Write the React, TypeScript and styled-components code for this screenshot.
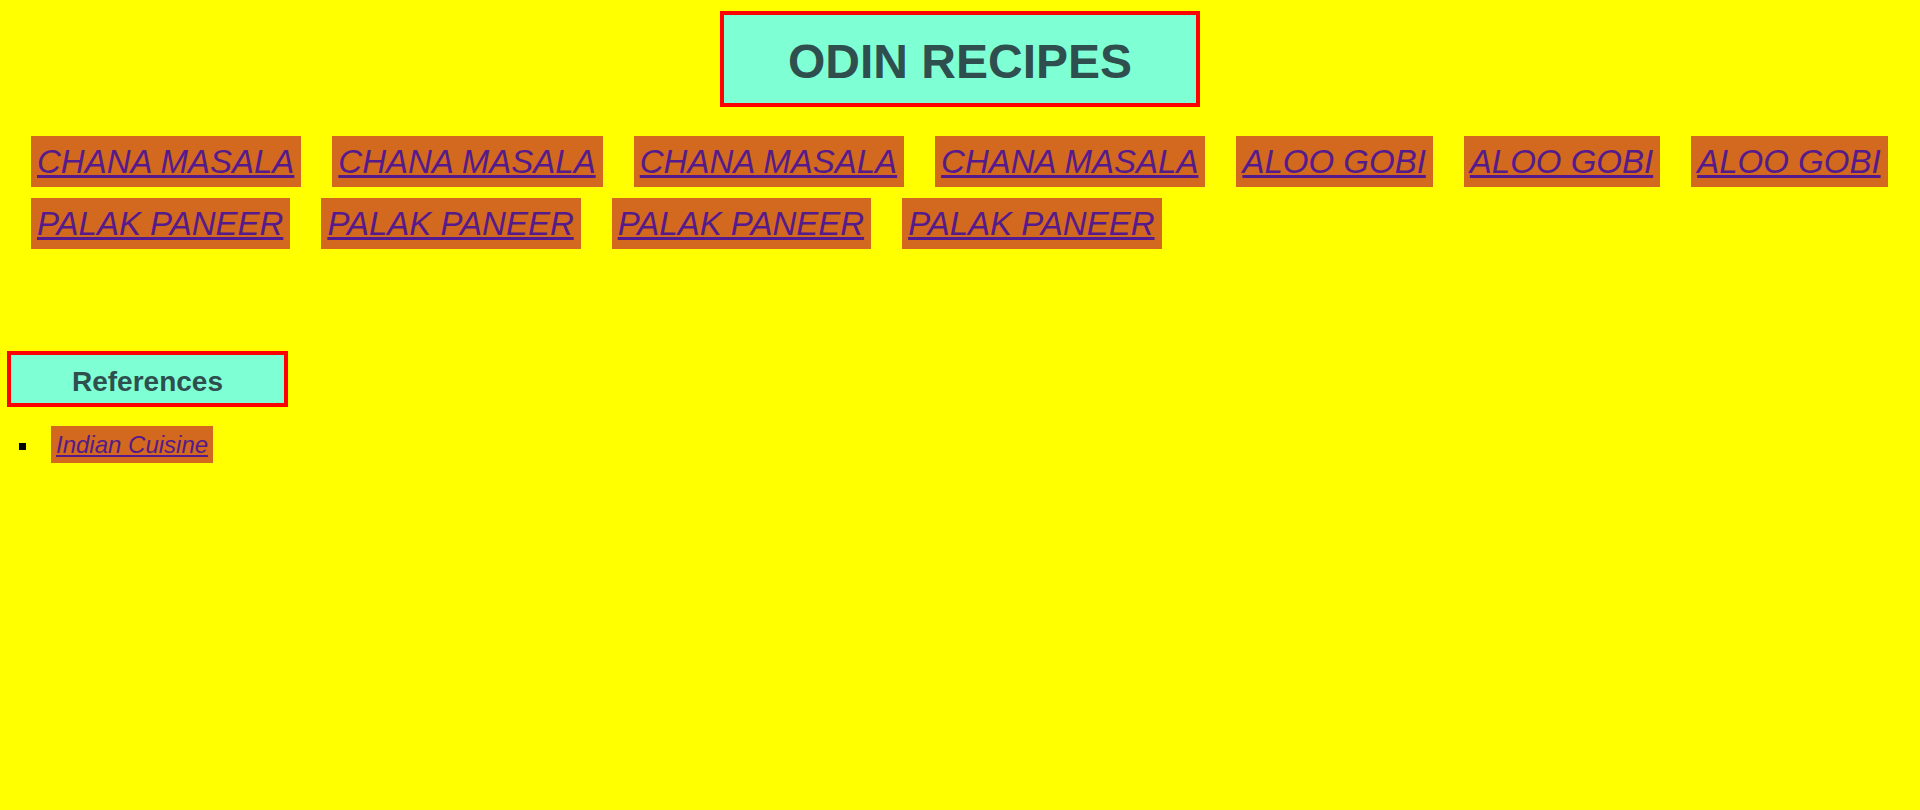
import React from "react";
import styled, { createGlobalStyle } from "styled-components";

const GlobalStyle = createGlobalStyle`
  body {
    margin: 0;
    background: #ffff00;
    font-family: "Liberation Sans", Arial, sans-serif;
  }
`;

const Page = styled.div`
  display: flex;
  flex-direction: column;
  padding: 11px 7px;
`;

const Title = styled.h1`
  box-sizing: border-box;
  align-self: center;
  min-width: 25vw;
  margin: 0;
  padding: 19px 16px 14px;
  border: 4px solid #ff0000;
  background: #7fffd4;
  color: #2f4f4f;
  font-size: 48px;
  line-height: 55px;
  text-align: center;
`;

const RecipeList = styled.ul`
  display: flex;
  flex-wrap: wrap;
  gap: 11px 31px;
  margin: 29px 24px 0;
  padding: 0;
  list-style: none;
`;

const RecipeItem = styled.li`
  display: flex;
`;

const TileLink = styled.a<{ $large?: boolean }>`
  display: inline-block;
  padding: ${({ $large }) => ($large ? "7px 7px 7px 6px" : "5px")};
  background: #d2691e;
  color: #551a8b;
  font-size: ${({ $large }) => ($large ? "33px" : "24px")};
  line-height: ${({ $large }) => ($large ? "37px" : "27px")};
  font-style: italic;
  text-decoration: underline;
`;

const References = styled.section`
  margin-top: 102px;
`;

const SectionTitle = styled.h2`
  width: fit-content;
  margin: 0;
  padding: 11px 61px 5px;
  border: 4px solid #ff0000;
  background: #7fffd4;
  color: #2f4f4f;
  font-size: 28px;
  line-height: 32px;
`;

const ReferenceList = styled.ul`
  margin: 19px 0 0;
  padding-left: 33px;
  list-style: square;
  font-size: 24px;
`;

const ReferenceItem = styled.li`
  padding-left: 11px;
`;

const recipes = [
  ...Array(4).fill("CHANA MASALA"),
  ...Array(3).fill("ALOO GOBI"),
  ...Array(4).fill("PALAK PANEER"),
] as string[];

export default function App() {
  return (
    <>
      <GlobalStyle />
      <Page>
        <Title>ODIN RECIPES</Title>
        <RecipeList>
          {recipes.map((name, index) => (
            <RecipeItem key={index}>
              <TileLink $large href="#">
                {name}
              </TileLink>
            </RecipeItem>
          ))}
        </RecipeList>
        <References>
          <SectionTitle>References</SectionTitle>
          <ReferenceList>
            <ReferenceItem>
              <TileLink href="#">Indian Cuisine</TileLink>
            </ReferenceItem>
          </ReferenceList>
        </References>
      </Page>
    </>
  );
}
